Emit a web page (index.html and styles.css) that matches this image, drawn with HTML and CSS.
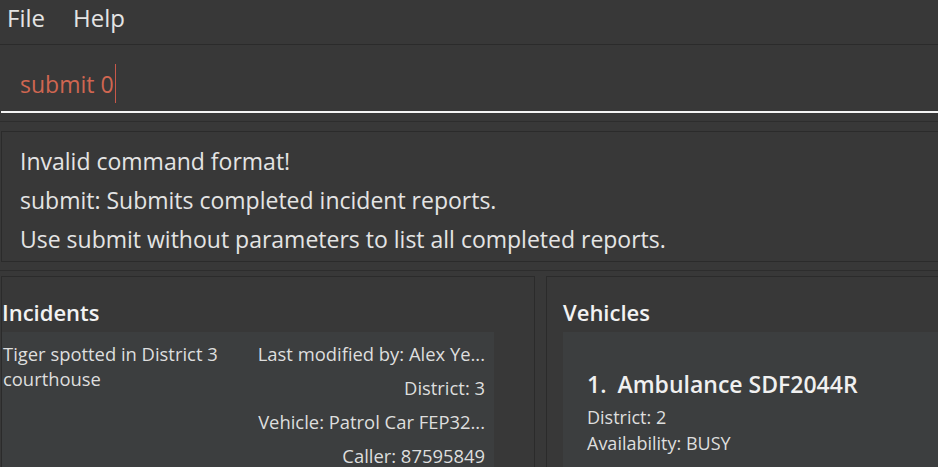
FILE: index.html
```html
<!DOCTYPE html>
<html>
<head>
<meta charset="utf-8">
<link rel="stylesheet" href="styles.css">
</head>
<body>
<div class="app">
  <div class="menubar">
    <span class="menu-item">File</span>
    <span class="menu-item">Help</span>
  </div>
  <div class="cmd-pane">
    <div class="cmd-field"><span class="cmd-text">submit 0</span><span class="caret"></span></div>
  </div>
  <div class="result-pane">
    <div class="result-box">
      <div class="result-line">Invalid command format!</div>
      <div class="result-line">submit: Submits completed incident reports.</div>
      <div class="result-line">Use submit without parameters to list all completed reports.</div>
    </div>
  </div>
  <div class="lists">
    <div class="panel panel-left">
      <div class="panel-title">Incidents</div>
      <div class="incident-card">
        <div class="inc-desc">Tiger spotted in District 3 courthouse</div>
        <div class="inc-meta">
          <div class="meta-line">Last modified by: Alex Ye...</div>
          <div class="meta-line">District: 3</div>
          <div class="meta-line">Vehicle: Patrol Car FEP32...</div>
          <div class="meta-line">Caller: 87595849</div>
        </div>
      </div>
    </div>
    <div class="panel panel-right">
      <div class="panel-title">Vehicles</div>
      <div class="vehicle-card">
        <div class="veh-title"><span class="veh-idx">1.</span><span class="veh-name">Ambulance SDF2044R</span></div>
        <div class="veh-line">District: 2</div>
        <div class="veh-line">Availability: BUSY</div>
      </div>
    </div>
  </div>
</div>
</body>
</html>
```
FILE: styles.css
```css
html, body {
  margin: 0;
  padding: 0;
}
body {
  width: 938px;
  height: 467px;
  overflow: hidden;
  background: #383838;
  font-family: "Open Sans", "Noto Sans", sans-serif;
  color: #e2e2e2;
}
.app {
  width: 938px;
  height: 467px;
  overflow: hidden;
  display: flex;
  flex-direction: column;
}
.menubar {
  height: 44px;
  border-bottom: 1px solid #2b2b2b;
  display: flex;
  gap: 28px;
  padding-left: 7px;
  font-size: 24px;
  line-height: 35.5px;
  color: #e4e4e4;
  flex: none;
}
.cmd-pane {
  flex: none;
  padding: 0 0 8px 1px;
  border-bottom: 1px solid #2d2d2d;
}
.cmd-field {
  height: 42px;
  padding: 24px 0 0 19px;
  border-bottom: 2px solid #f4f4f4;
  font-size: 23px;
  line-height: 30px;
  color: #d06651;
  white-space: nowrap;
}
.caret {
  display: inline-block;
  width: 1.5px;
  height: 39px;
  margin-top: -39px;
  margin-left: 1px;
  vertical-align: -10px;
  background: #c8584a;
}
.result-pane {
  flex: none;
  padding: 9px 0 8px 1px;
  border-bottom: 1px solid #2d2d2d;
}
.result-box {
  width: 960px;
  height: 119px;
  padding: 10px 0 0 18px;
  border: 1px solid #2b2b2b;
  font-size: 23px;
  line-height: 39px;
  color: #e4e4e4;
  white-space: nowrap;
}
.lists {
  flex: 1;
  display: flex;
  gap: 11px;
  margin-top: 5px;
  min-height: 0;
}
.panel {
  border-top: 1px solid #2b2b2b;
  border-left: 1px solid #2b2b2b;
  min-height: 0;
}
.panel-left {
  margin-left: 1px;
  width: 532px;
  flex: none;
  border-right: 1px solid #2b2b2b;
}
.panel-right {
  flex: 1;
  padding-left: 16px;
}
.panel-title {
  padding: 21px 0 6px 0;
  line-height: 28px;
  font-size: 22px;
  font-weight: 600;
  color: #f2f2f2;
}
.incident-card {
  width: 492px;
  box-sizing: border-box;
  height: 200px;
  background: #3c3e3f;
  display: flex;
  padding: 8.5px 9px 0 1px;
  font-size: 18.4px;
  line-height: 25px;
  color: #dedede;
}
.inc-desc {
  width: 240px;
  flex: none;
}
.inc-meta {
  flex: 1;
  display: flex;
  flex-direction: column;
  align-items: flex-end;
  gap: 9.3px;
  white-space: nowrap;
}
.vehicle-card {
  height: 200px;
  background: #3c3e3f;
  padding: 38px 0 0 24px;
  font-size: 18px;
  line-height: 26px;
  color: #dedede;
}
.veh-title {
  font-size: 23px;
  font-weight: 600;
  line-height: 28px;
  color: #f0f0f0;
  margin-bottom: 5.7px;
  white-space: nowrap;
}
.veh-idx {
  margin-right: 11px;
}
```
